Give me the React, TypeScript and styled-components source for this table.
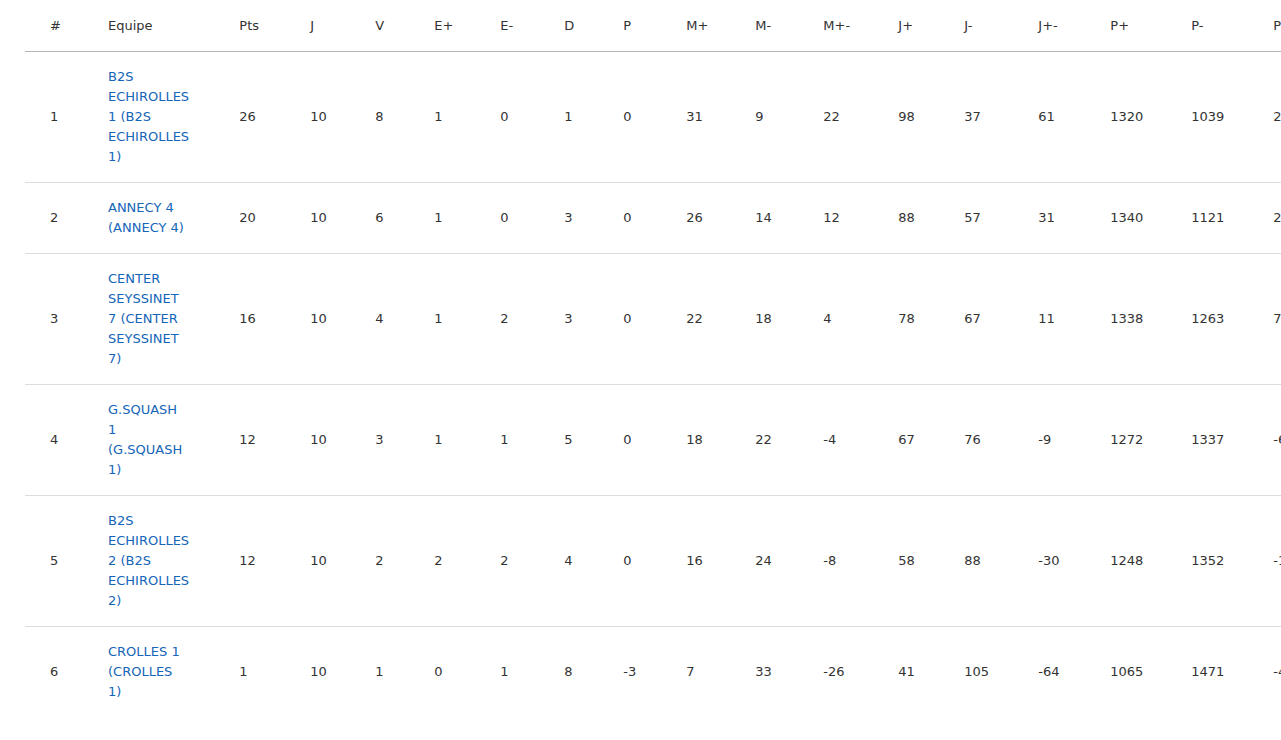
import styled, { createGlobalStyle } from 'styled-components';

const GlobalStyle = createGlobalStyle`
  html, body {
    margin: 0;
    padding: 0;
    background: #fff;
    overflow: hidden;
  }
  body {
    font-family: 'DejaVu Sans', Verdana, sans-serif;
    font-size: 13px;
    color: #333;
  }
`;

interface Column {
  label: string;
  width: number;
}

const columns: Column[] = [
  { label: '#', width: 58 },
  { label: 'Equipe', width: 131.3 },
  { label: 'Pts', width: 71 },
  { label: 'J', width: 65 },
  { label: 'V', width: 59 },
  { label: 'E+', width: 66 },
  { label: 'E-', width: 64 },
  { label: 'D', width: 59 },
  { label: 'P', width: 63 },
  { label: 'M+', width: 69 },
  { label: 'M-', width: 68 },
  { label: 'M+-', width: 75 },
  { label: 'J+', width: 66 },
  { label: 'J-', width: 74 },
  { label: 'J+-', width: 72 },
  { label: 'P+', width: 81 },
  { label: 'P-', width: 82 },
  { label: 'P+-', width: 75 },
];

const tableWidth = columns.reduce((sum, c) => sum + c.width, 0);

interface Team {
  rank: number;
  name: string;
  stats: number[];
}

const teams: Team[] = [
  { rank: 1, name: 'B2S ECHIROLLES 1 (B2S ECHIROLLES 1)', stats: [26, 10, 8, 1, 0, 1, 0, 31, 9, 22, 98, 37, 61, 1320, 1039, 281] },
  { rank: 2, name: 'ANNECY 4 (ANNECY 4)', stats: [20, 10, 6, 1, 0, 3, 0, 26, 14, 12, 88, 57, 31, 1340, 1121, 219] },
  { rank: 3, name: 'CENTER SEYSSINET 7 (CENTER SEYSSINET 7)', stats: [16, 10, 4, 1, 2, 3, 0, 22, 18, 4, 78, 67, 11, 1338, 1263, 75] },
  { rank: 4, name: 'G.SQUASH 1 (G.SQUASH 1)', stats: [12, 10, 3, 1, 1, 5, 0, 18, 22, -4, 67, 76, -9, 1272, 1337, -65] },
  { rank: 5, name: 'B2S ECHIROLLES 2 (B2S ECHIROLLES 2)', stats: [12, 10, 2, 2, 2, 4, 0, 16, 24, -8, 58, 88, -30, 1248, 1352, -104] },
  { rank: 6, name: 'CROLLES 1 (CROLLES 1)', stats: [1, 10, 1, 0, 1, 8, -3, 7, 33, -26, 41, 105, -64, 1065, 1471, -406] },
];

export default function App() {
  return (
    <>
      <GlobalStyle />
      <Page>
        <Standings $width={tableWidth}>
          <colgroup>
            {columns.map(c => (
              <Col key={c.label} $width={c.width} />
            ))}
          </colgroup>
          <thead>
            <tr>
              {columns.map(c => (
                <HeadCell key={c.label}>{c.label}</HeadCell>
              ))}
            </tr>
          </thead>
          <tbody>
            {teams.map(t => (
              <TeamRow key={t.rank}>
                <Cell>{t.rank}</Cell>
                <Cell>
                  <TeamLink href="#">{t.name}</TeamLink>
                </Cell>
                {t.stats.map((s, i) => (
                  <Cell key={i}>{s}</Cell>
                ))}
              </TeamRow>
            ))}
          </tbody>
        </Standings>
      </Page>
    </>
  );
}

const Page = styled.div`
  padding: 1px 0 0 25px;
  overflow: hidden;
`;

const Standings = styled.table<{ $width: number }>`
  table-layout: fixed;
  border-collapse: collapse;
  border-spacing: 0;
  width: ${p => p.$width}px;
  min-width: ${p => p.$width}px;
`;

const Col = styled.col<{ $width: number }>`
  width: ${p => p.$width}px;
`;

const HeadCell = styled.th`
  box-sizing: border-box;
  padding: 15px 25px;
  line-height: 20px;
  text-align: left;
  font-weight: normal;
  color: #333;
  border-bottom: 1px solid #b3b3b3;
  vertical-align: middle;
  white-space: nowrap;
`;

const TeamRow = styled.tr`
  & + & {
    border-top: 1px solid #ddd;
  }
`;

const Cell = styled.td`
  box-sizing: border-box;
  padding: 15px 25px;
  line-height: 20px;
  vertical-align: middle;
  text-align: left;
  color: #333;
`;

const TeamLink = styled.a`
  color: #1565b8;
  text-decoration: none;
`;
